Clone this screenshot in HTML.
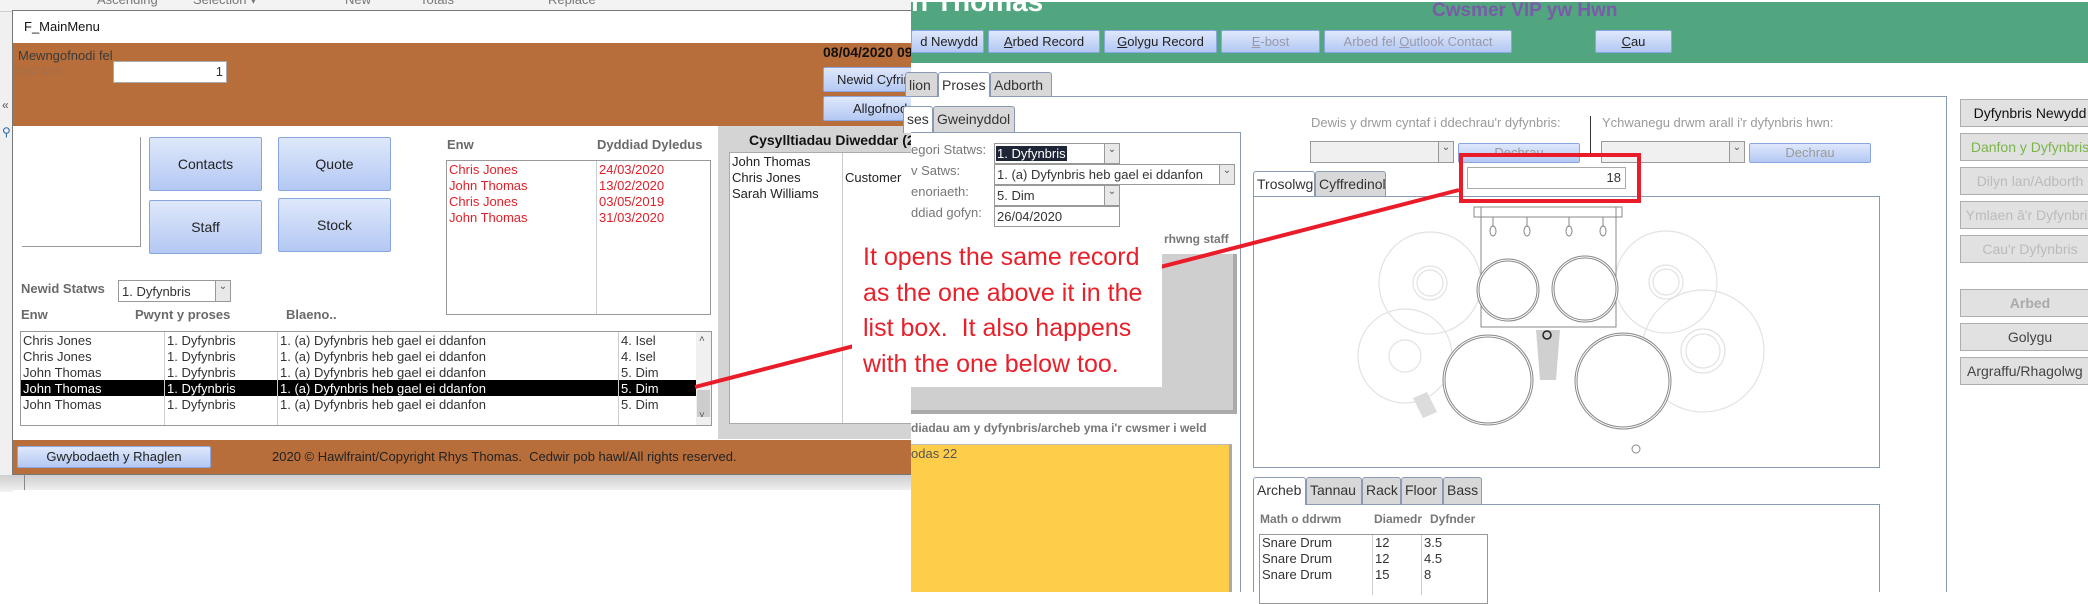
<!DOCTYPE html>
<html><head><meta charset="utf-8">
<style>
*{margin:0;padding:0;box-sizing:border-box}
body{width:2088px;height:592px;overflow:hidden;position:relative;background:#fff;font-family:"Liberation Sans Narrow","Liberation Sans",sans-serif;font-size:13px;color:#333}
.a{position:absolute;white-space:nowrap}
.btn{position:absolute;background:linear-gradient(#dfe8fb,#b3c8f3);border:1px solid #8aa6e0;border-radius:2px;text-align:center;color:#222}
.m{font-family:"Liberation Sans",sans-serif}
.lbl{color:#6a6a6a;font-weight:bold}
.tab{position:absolute;background:#d8d8d8;border:1px solid #8a9ab5;border-bottom:none;border-radius:3px 3px 0 0;font-family:"Liberation Sans",sans-serif;font-size:14px;color:#333;padding:4px 3px 0}
.tab.on{background:#fff}
.rb{position:absolute;left:1960px;width:140px;height:28px;background:#e1e1e1;border:1px solid #adadad;font-family:"Liberation Sans",sans-serif;font-size:14px;text-align:center;line-height:26px;color:#bbb}
.combo{position:absolute;background:#fff;border:1px solid #999}
.combo .dd{position:absolute;right:0;top:0;bottom:0;width:15px;background:#e8e8e8;border-left:1px solid #999;font-size:10px;text-align:center;color:#555}
</style></head><body>

<!-- Access background left -->
<div class="a" style="left:0;top:0;width:911px;height:12px;background:#f3f3f3;border-bottom:1px solid #ccc"></div>
<div class="a m" style="left:97px;top:-8px;font-size:13px;color:#777">Ascending</div>
<div class="a m" style="left:193px;top:-8px;font-size:13px;color:#777">Selection ▾</div>
<div class="a m" style="left:345px;top:-8px;font-size:13px;color:#777">New</div>
<div class="a m" style="left:420px;top:-8px;font-size:13px;color:#777">Totals</div>
<div class="a m" style="left:548px;top:-8px;font-size:13px;color:#777">Replace</div>
<div class="a" style="left:0;top:12px;width:13px;height:480px;background:#f0f0f0"></div>
<div class="a" style="left:2px;top:98px;font-size:12px;color:#555">«</div>
<div class="a" style="left:2px;top:125px;font-size:12px;color:#2a6ab0">⚲</div>

<!-- Left window -->
<div class="a" style="left:12px;top:10px;width:900px;height:465px;background:#fff;border:1px solid #777"></div>
<div class="a" style="left:24px;top:19px;font-size:13px;color:#111">F_MainMenu</div>
<div class="a" style="left:13px;top:43px;width:898px;height:83px;background:#b86e3b"></div>
<div class="a m" style="left:18px;top:48px;font-size:13px;color:#3a3a3a">Mewngofnodi fel</div>
<div class="a m" style="left:14px;top:65px;font-size:12px;color:#a0704c">IDSTAFF</div>
<div class="a m" style="left:113px;top:61px;width:114px;height:22px;background:#fff;border:1px solid #aaa;text-align:right;padding-right:3px;font-size:13px;line-height:20px">1</div>
<div class="a" style="left:823px;top:44px;font-size:14px;font-weight:bold;color:#111">08/04/2020 09:</div>
<div class="btn" style="left:823px;top:67px;width:95px;height:25px;line-height:23px;text-align:left;padding-left:13px">Newid Cyfrin</div>
<div class="btn" style="left:823px;top:96px;width:95px;height:25px;line-height:23px;text-align:left;padding-left:29px">Allgofnod</div>

<div class="a" style="left:22px;top:137px;width:119px;height:110px;border-right:1px solid #999;border-bottom:1px solid #999"></div>
<div class="btn" style="left:149px;top:137px;width:113px;height:54px;line-height:52px;font-size:14px">Contacts</div>
<div class="btn" style="left:278px;top:137px;width:113px;height:54px;line-height:52px;font-size:14px">Quote</div>
<div class="btn" style="left:149px;top:200px;width:113px;height:54px;line-height:52px;font-size:14px">Staff</div>
<div class="btn" style="left:278px;top:198px;width:113px;height:54px;line-height:52px;font-size:14px">Stock</div>

<div class="a lbl" style="left:447px;top:137px">Enw</div>
<div class="a lbl" style="left:597px;top:137px">Dyddiad Dyledus</div>
<div class="a" style="left:446px;top:160px;width:265px;height:155px;border:1px solid #999"></div>
<div class="a" style="left:596px;top:161px;width:1px;height:153px;background:#ccc"></div>
<div class="a" style="left:449px;top:162px;line-height:16px;color:#e0202a">Chris Jones<br>John Thomas<br>Chris Jones<br>John Thomas</div>
<div class="a" style="left:599px;top:162px;line-height:16px;color:#e0202a">24/03/2020<br>13/02/2020<br>03/05/2019<br>31/03/2020</div>

<div class="a" style="left:718px;top:126px;width:194px;height:313px;background:#d4d4d4"></div>
<div class="a" style="left:749px;top:132px;font-size:14px;font-weight:bold;color:#111">Cysylltiadau Diweddar (25</div>
<div class="a" style="left:729px;top:152px;width:183px;height:272px;background:#fff;border:1px solid #aaa"></div>
<div class="a" style="left:842px;top:153px;width:1px;height:270px;background:#ccc"></div>
<div class="a" style="left:732px;top:154px;line-height:16px;color:#222">John Thomas<br>Chris Jones<br>Sarah Williams</div>
<div class="a" style="left:845px;top:170px;color:#222">Customer</div>

<div class="a lbl" style="left:21px;top:281px">Newid Statws</div>
<div class="combo" style="left:118px;top:280px;width:113px;height:22px"><span class="a" style="left:3px;top:3px">1. Dyfynbris</span><div class="dd">⌄</div></div>
<div class="a lbl" style="left:21px;top:307px">Enw</div>
<div class="a lbl" style="left:135px;top:307px">Pwynt y proses</div>
<div class="a lbl" style="left:286px;top:307px">Blaeno..</div>
<div class="a" style="left:20px;top:331px;width:692px;height:95px;border:1px solid #999"></div>
<div class="a" style="left:21px;top:380px;width:675px;height:16px;background:#000"></div>
<div class="a" style="left:164px;top:332px;width:1px;height:93px;background:#ccc"></div>
<div class="a" style="left:277px;top:332px;width:1px;height:93px;background:#ccc"></div>
<div class="a" style="left:618px;top:332px;width:1px;height:93px;background:#ccc"></div>
<div class="a" style="left:696px;top:332px;width:15px;height:93px;background:#f0f0f0"></div>
<div class="a" style="left:697px;top:390px;width:13px;height:27px;background:#cdcdcd"></div>
<div class="a" style="left:699px;top:334px;font-size:10px;color:#555">˄</div>
<div class="a" style="left:699px;top:410px;font-size:10px;color:#555">˅</div>
<div class="a" style="left:23px;top:333px;line-height:16px;color:#333">Chris Jones<br>Chris Jones<br>John Thomas<br><span style="color:#fff">John Thomas</span><br>John Thomas</div>
<div class="a" style="left:167px;top:333px;line-height:16px;color:#333">1. Dyfynbris<br>1. Dyfynbris<br>1. Dyfynbris<br><span style="color:#fff">1. Dyfynbris</span><br>1. Dyfynbris</div>
<div class="a" style="left:280px;top:333px;line-height:16px;color:#333">1. (a) Dyfynbris heb gael ei ddanfon<br>1. (a) Dyfynbris heb gael ei ddanfon<br>1. (a) Dyfynbris heb gael ei ddanfon<br><span style="color:#fff">1. (a) Dyfynbris heb gael ei ddanfon</span><br>1. (a) Dyfynbris heb gael ei ddanfon</div>
<div class="a" style="left:621px;top:333px;line-height:16px;color:#333">4. Isel<br>4. Isel<br>5. Dim<br><span style="color:#fff">5. Dim</span><br>5. Dim</div>

<div class="a" style="left:13px;top:440px;width:898px;height:34px;background:#b86e3b"></div>
<div class="btn" style="left:17px;top:446px;width:194px;height:22px;line-height:20px">Gwybodaeth y Rhaglen</div>
<div class="a" style="left:272px;top:449px;color:#222">2020 © Hawlfraint/Copyright Rhys Thomas.&nbsp; Cedwir pob hawl/All rights reserved.</div>
<div class="a" style="left:0;top:475px;width:911px;height:15px;background:linear-gradient(#cfcfcf,#eee)"></div>
<div class="a" style="left:24px;top:475px;width:1px;height:15px;background:#888"></div>

<!-- Right app -->
<div class="a" style="left:911px;top:0;width:1177px;height:592px;background:#fff"></div>
<div class="a" style="left:911px;top:2px;width:1177px;height:61px;background:#52a67f"></div>
<div class="a m" style="left:911px;top:-14px;font-size:28px;font-weight:bold;color:#fff">n Thomas</div>
<div class="a m" style="left:1432px;top:0px;font-size:19px;font-weight:bold;color:#7a5ba8">Cwsmer VIP yw Hwn</div>
<div class="btn m" style="left:911px;top:30px;width:73px;height:23px;line-height:21px;font-size:13px;text-align:right;padding-right:5px">d Newydd</div>
<div class="btn m" style="left:988px;top:30px;width:112px;height:23px;line-height:21px;font-size:13px"><u>A</u>rbed Record</div>
<div class="btn m" style="left:1104px;top:30px;width:113px;height:23px;line-height:21px;font-size:13px"><u>G</u>olygu Record</div>
<div class="btn m" style="left:1221px;top:30px;width:99px;height:23px;line-height:21px;font-size:13px;color:#99a"><u>E</u>-bost</div>
<div class="btn m" style="left:1324px;top:30px;width:188px;height:23px;line-height:21px;font-size:13px;color:#99a">Arbed fel <u>O</u>utlook Contact</div>
<div class="btn m" style="left:1595px;top:30px;width:77px;height:23px;line-height:21px;font-size:13px"><u>C</u>au</div>

<!-- main tabs -->
<div class="a" style="left:911px;top:96px;width:1036px;height:1px;background:#8a9ab5"></div>
<div class="a" style="left:1946px;top:96px;width:1px;height:496px;background:#8a9ab5"></div>
<div class="tab" style="left:905px;top:72px;width:33px;height:24px">lion</div>
<div class="tab on" style="left:938px;top:72px;width:52px;height:25px">Proses</div>
<div class="tab" style="left:990px;top:72px;width:62px;height:24px">Adborth</div>

<!-- inner tabs -->
<div class="tab on" style="left:903px;top:106px;width:30px;height:27px">ses</div>
<div class="tab" style="left:933px;top:106px;width:82px;height:26px">Gweinyddol</div>
<div class="a" style="left:911px;top:132px;width:330px;height:1px;background:#8a9ab5"></div>
<div class="a" style="left:1240px;top:132px;width:1px;height:460px;background:#8a9ab5"></div>

<div class="a m" style="left:911px;top:142px;font-size:13px;color:#777">egori Statws:</div>
<div class="a m" style="left:911px;top:163px;font-size:13px;color:#777">v Satws:</div>
<div class="a m" style="left:911px;top:184px;font-size:13px;color:#777">enoriaeth:</div>
<div class="a m" style="left:911px;top:205px;font-size:13px;color:#777">ddiad gofyn:</div>
<div class="combo m" style="left:994px;top:143px;width:126px;height:21px"><span class="a" style="left:1px;top:2px;background:#1d2536;color:#fff;font-size:13px;padding:0 1px">1. Dyfynbris</span><div class="dd">⌄</div></div>
<div class="combo m" style="left:994px;top:164px;width:241px;height:21px"><span class="a" style="left:2px;top:2px;font-size:13px">1. (a) Dyfynbris heb gael ei ddanfon</span><div class="dd">⌄</div></div>
<div class="combo m" style="left:994px;top:185px;width:126px;height:21px"><span class="a" style="left:2px;top:2px;font-size:13px">5. Dim</span><div class="dd">⌄</div></div>
<div class="combo m" style="left:994px;top:206px;width:126px;height:21px"><span class="a" style="left:2px;top:2px;font-size:13px">26/04/2020</span></div>
<div class="a m" style="left:1164px;top:232px;font-size:12px;font-weight:bold;color:#777">rhwng staff</div>
<div class="a" style="left:911px;top:254px;width:326px;height:160px;background:#cfcfcf;border-right:4px solid #aaa;border-bottom:4px solid #aaa"></div>
<div class="a m" style="left:911px;top:421px;font-size:12px;font-weight:bold;color:#777">diadau am y dyfynbris/archeb yma i'r cwsmer i weld</div>
<div class="a" style="left:911px;top:444px;width:321px;height:148px;background:#fecd4a;border-top:1px solid #bbb;border-right:3px solid #aaa"></div>
<div class="a m" style="left:911px;top:446px;font-size:13px;color:#555">odas 22</div>

<!-- right top -->
<div class="a m" style="left:1311px;top:115px;font-size:13px;color:#9a9a9a">Dewis y drwm cyntaf i ddechrau'r dyfynbris:</div>
<div class="a" style="left:1590px;top:116px;width:1px;height:38px;background:#333"></div>
<div class="a m" style="left:1602px;top:115px;font-size:13px;color:#9a9a9a">Ychwanegu drwm arall i'r dyfynbris hwn:</div>
<div class="combo" style="left:1310px;top:141px;width:144px;height:22px;background:#f0f0f0"><div class="dd">⌄</div></div>
<div class="btn m" style="left:1458px;top:143px;width:122px;height:20px;line-height:18px;color:#999;font-size:13px">Dechrau</div>
<div class="combo" style="left:1601px;top:141px;width:144px;height:22px;background:#f0f0f0"><div class="dd">⌄</div></div>
<div class="btn m" style="left:1749px;top:143px;width:122px;height:20px;line-height:18px;color:#999;font-size:13px">Dechrau</div>
<div class="a" style="left:1467px;top:167px;width:159px;height:22px;border:1px solid #aaa;background:#fff;text-align:right;padding-right:4px;line-height:20px;font-size:13px">18</div>

<div class="tab on" style="left:1253px;top:171px;width:62px;height:26px">Trosolwg</div>
<div class="tab" style="left:1315px;top:171px;width:71px;height:25px">Cyffredinol</div>
<div class="a" style="left:1253px;top:196px;width:627px;height:272px;border:1px solid #8a9ab5"></div>

<svg class="a" style="left:1253px;top:196px" width="627" height="272" viewBox="1253 196 627 272">
 <g fill="none" stroke="#e2e2e2" stroke-width="1.2">
  <circle cx="1430" cy="283" r="51"/><circle cx="1430" cy="283" r="17"/><circle cx="1430" cy="283" r="13"/>
  <circle cx="1405" cy="356" r="47"/><circle cx="1405" cy="356" r="16"/>
  <circle cx="1666" cy="282" r="51"/><circle cx="1666" cy="282" r="17"/><circle cx="1666" cy="282" r="13"/>
  <circle cx="1703" cy="351" r="61"/><circle cx="1703" cy="351" r="22"/><circle cx="1703" cy="351" r="17"/>
 </g>
 <g fill="none" stroke="#888" stroke-width="1">
  <rect x="1481" y="207" width="135" height="120"/>
  <rect x="1474" y="207" width="148" height="10"/>
  <circle cx="1508" cy="290" r="31" fill="#fff"/><circle cx="1508" cy="290" r="29"/>
  <circle cx="1585" cy="289" r="33" fill="#fff"/><circle cx="1585" cy="289" r="31"/>
  <circle cx="1488" cy="380" r="45" fill="#fff"/><circle cx="1488" cy="380" r="43"/>
  <circle cx="1623" cy="381" r="48" fill="#fff"/><circle cx="1623" cy="381" r="46"/>
  <path d="M1493 217v10M1527 217v10M1569 217v10M1603 217v10"/>
  <ellipse cx="1493" cy="231" rx="3" ry="5"/><ellipse cx="1527" cy="231" rx="3" ry="5"/><ellipse cx="1569" cy="231" rx="3" ry="5"/><ellipse cx="1603" cy="231" rx="3" ry="5"/>
  <circle cx="1636" cy="449" r="4"/>
 </g>
 <path d="M1536 330 h24 l-4 50 h-16z" fill="#d0d0d0"/>
 <circle cx="1547" cy="335" r="4" fill="none" stroke="#222" stroke-width="1.5"/>
 <path d="M1413 398 l14 -6 l10 20 l-14 6z" fill="#dcdcdc"/>
</svg>

<!-- bottom tabs -->
<div class="tab on" style="left:1253px;top:477px;width:53px;height:28px">Archeb</div>
<div class="tab" style="left:1306px;top:477px;width:56px;height:27px">Tannau</div>
<div class="tab" style="left:1362px;top:477px;width:39px;height:27px">Rack</div>
<div class="tab" style="left:1401px;top:477px;width:42px;height:27px">Floor</div>
<div class="tab" style="left:1443px;top:477px;width:39px;height:27px">Bass</div>
<div class="a" style="left:1306px;top:504px;width:574px;height:1px;background:#8a9ab5"></div>
<div class="a" style="left:1253px;top:504px;width:1px;height:88px;background:#8a9ab5"></div>
<div class="a" style="left:1879px;top:504px;width:1px;height:88px;background:#8a9ab5"></div>
<div class="a m" style="left:1260px;top:512px;font-size:12px;font-weight:bold;color:#777">Math o ddrwm</div>
<div class="a m" style="left:1374px;top:512px;font-size:12px;font-weight:bold;color:#777">Diamedr</div>
<div class="a m" style="left:1430px;top:512px;font-size:12px;font-weight:bold;color:#777">Dyfnder</div>
<div class="a" style="left:1259px;top:534px;width:229px;height:70px;border:1px solid #999"></div>
<div class="a" style="left:1372px;top:535px;width:1px;height:60px;background:#ccc"></div>
<div class="a" style="left:1421px;top:535px;width:1px;height:60px;background:#ccc"></div>
<div class="a m" style="left:1262px;top:535px;line-height:16px;font-size:13px;color:#333">Snare Drum<br>Snare Drum<br>Snare Drum</div>
<div class="a m" style="left:1375px;top:535px;line-height:16px;font-size:13px;color:#333">12<br>12<br>15</div>
<div class="a m" style="left:1424px;top:535px;line-height:16px;font-size:13px;color:#333">3.5<br>4.5<br>8</div>

<!-- right side buttons -->
<div class="rb" style="top:99px;color:#111">Dyfynbris Newydd</div>
<div class="rb" style="top:133px;color:#7bb54a">Danfon y Dyfynbris</div>
<div class="rb" style="top:167px">Dilyn lan/Adborth</div>
<div class="rb" style="top:201px">Ymlaen â'r Dyfynbris</div>
<div class="rb" style="top:235px">Cau'r Dyfynbris</div>
<div class="rb" style="top:289px;font-weight:bold;color:#aaa">Arbed</div>
<div class="rb" style="top:323px;color:#444">Golygu</div>
<div class="rb" style="top:357px;color:#444;text-align:left;padding-left:6px">Argraffu/Rhagolwg</div>

<!-- annotation -->
<svg class="a" style="left:0;top:0" width="2088" height="592">
 <line x1="695" y1="387" x2="1459" y2="190" stroke="#ea1c2a" stroke-width="4"/>
 <rect x="1461" y="155" width="178" height="46" fill="none" stroke="#ea1c2a" stroke-width="4"/>
</svg>
<div class="a" style="left:852px;top:236px;width:310px;height:151px;background:#fff"></div>
<div class="a m" style="left:863px;top:240px;font-size:25px;line-height:35.5px;color:#e8202a;font-family:'Liberation Sans',sans-serif">It opens the same record<br>as the one above it in the<br>list box.&nbsp; It also happens<br>with the one below too.</div>

</body></html>
